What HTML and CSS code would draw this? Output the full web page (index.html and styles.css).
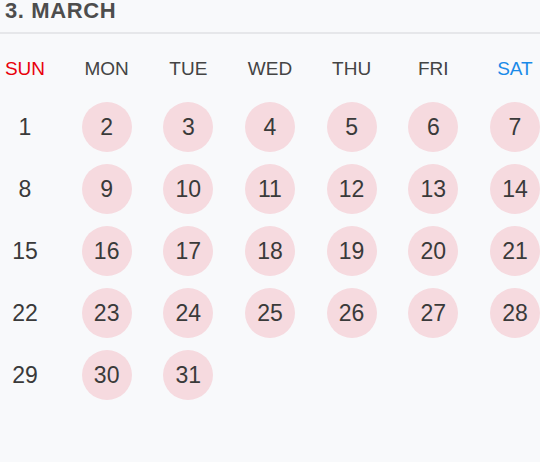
FILE: index.html
```html
<!DOCTYPE html>
<html>
<head>
<meta charset="utf-8">
<link rel="stylesheet" href="styles.css">
</head>
<body>
<div class="page">
  <div class="title">3. MARCH</div>
  <div class="weekdays">
    <div class="wd sun">SUN</div>
    <div class="wd">MON</div>
    <div class="wd">TUE</div>
    <div class="wd">WED</div>
    <div class="wd">THU</div>
    <div class="wd">FRI</div>
    <div class="wd sat">SAT</div>
  </div>
  <div class="weeks">
    <div class="week">
      <div class="day">1</div><div class="day on">2</div><div class="day on">3</div><div class="day on">4</div><div class="day on">5</div><div class="day on">6</div><div class="day on">7</div>
    </div>
    <div class="week">
      <div class="day">8</div><div class="day on">9</div><div class="day on">10</div><div class="day on">11</div><div class="day on">12</div><div class="day on">13</div><div class="day on">14</div>
    </div>
    <div class="week">
      <div class="day">15</div><div class="day on">16</div><div class="day on">17</div><div class="day on">18</div><div class="day on">19</div><div class="day on">20</div><div class="day on">21</div>
    </div>
    <div class="week">
      <div class="day">22</div><div class="day on">23</div><div class="day on">24</div><div class="day on">25</div><div class="day on">26</div><div class="day on">27</div><div class="day on">28</div>
    </div>
    <div class="week">
      <div class="day">29</div><div class="day on">30</div><div class="day on">31</div><div class="day empty"></div><div class="day empty"></div><div class="day empty"></div><div class="day empty"></div>
    </div>
  </div>
</div>
</body>
</html>
```
FILE: styles.css
```css
html, body {
  margin: 0;
  padding: 0;
  background: #f8f9fb;
}
body {
  font-family: "Liberation Sans", Arial, sans-serif;
  width: 540px;
  height: 462px;
  overflow: hidden;
}
.title {
  height: 32px;
  line-height: 21px;
  padding-left: 5px;
  font-size: 22px;
  font-weight: bold;
  letter-spacing: 0.6px;
  color: #4d4d4d;
  border-bottom: 2px solid #e6e7ea;
}
.weekdays {
  display: flex;
  justify-content: space-between;
  margin-top: 24px;
  height: 22px;
}
.wd {
  width: 50px;
  text-align: center;
  font-size: 19px;
  line-height: 22px;
  color: #444;
}
.wd.sun { color: #e8000b; }
.wd.sat { color: #1a8ae8; }
.weeks {
  margin-top: 22px;
  display: flex;
  flex-direction: column;
  gap: 12px;
}
.week {
  display: flex;
  justify-content: space-between;
}
.day {
  width: 50px;
  height: 50px;
  border-radius: 50%;
  display: flex;
  align-items: center;
  justify-content: center;
  font-size: 23px;
  color: #3a3a3a;
}
.day.on { background: #f6dadf; }
```
